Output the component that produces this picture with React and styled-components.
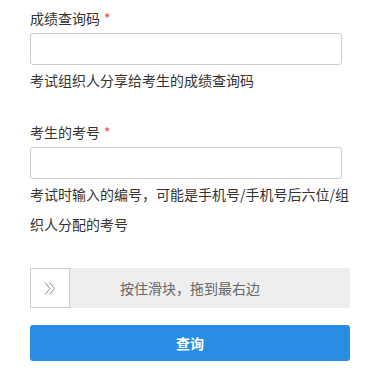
import React from 'react'
import styled, { createGlobalStyle } from 'styled-components'

const GlobalStyle = createGlobalStyle`
  body {
    margin: 0;
    background: #fff;
    font-family: "Noto Sans CJK SC", "Liberation Sans", sans-serif;
    color: #333;
  }
`

const Form = styled.div`
  width: 320px;
  padding: 8px 0 0 30px;
`

const Group = styled.div`
  margin-bottom: 27px;
`

const Label = styled.div`
  font-size: 14px;
  line-height: 20px;
  margin-bottom: 5px;
  color: #333;
`

const Star = styled.span`
  color: #f5474a;
  margin-left: 4px;
`

const Input = styled.input`
  display: block;
  box-sizing: border-box;
  width: 312px;
  height: 32px;
  border: 1px solid #ccc;
  border-radius: 3px;
  outline: none;
  padding: 0 8px;
  font-size: 14px;
  font-family: inherit;
`

const Help = styled.div`
  font-size: 14px;
  line-height: 30px;
  color: #333;
`

const Slider = styled.div`
  position: relative;
  height: 40px;
  margin-top: 29px;
  background: #eee;
  display: flex;
  align-items: center;
  justify-content: center;
`

const Handle = styled.div`
  position: absolute;
  left: 0;
  top: 0;
  box-sizing: border-box;
  width: 40px;
  height: 40px;
  background: #fff;
  border: 1px solid #ccc;
  display: flex;
  align-items: center;
  justify-content: center;
`

const SliderText = styled.span`
  font-size: 14px;
  color: #666;
`

const Button = styled.button`
  display: block;
  width: 100%;
  height: 36px;
  margin-top: 17px;
  border: none;
  border-radius: 3px;
  background: #2a8de3;
  color: #fff;
  font-size: 14px;
  font-weight: bold;
  font-family: inherit;
`

export default () => {
  return (
    <>
      <GlobalStyle />
      <Form>
        <Group>
          <Label>成绩查询码<Star>*</Star></Label>
          <Input />
          <Help>考试组织人分享给考生的成绩查询码</Help>
        </Group>
        <Group>
          <Label>考生的考号<Star>*</Star></Label>
          <Input />
          <Help>考试时输入的编号，可能是手机号/手机号后六位/组织人分配的考号</Help>
        </Group>
        <Slider>
          <Handle>
            <svg width="12" height="13" viewBox="0 0 12 13" fill="none" stroke="#8a8a8a" strokeWidth="1">
              <path d="M1 0.5 L6 6.5 L1 12.5" />
              <path d="M5.5 0.5 L10.5 6.5 L5.5 12.5" />
            </svg>
          </Handle>
          <SliderText>按住滑块，拖到最右边</SliderText>
        </Slider>
        <Button>查询</Button>
      </Form>
    </>
  )
}
